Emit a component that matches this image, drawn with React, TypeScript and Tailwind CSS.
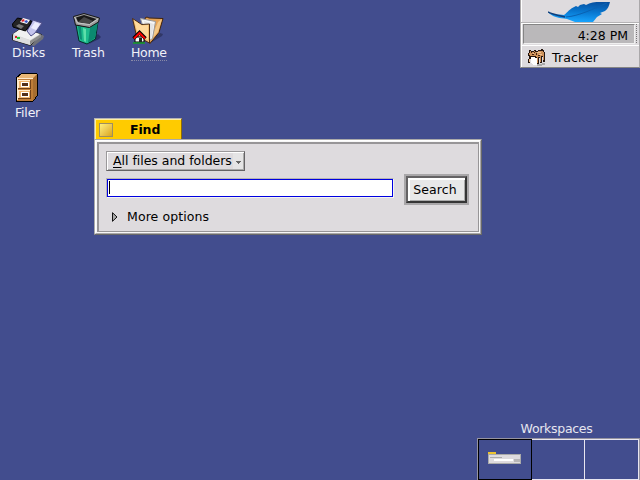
import React from "react";

function DisksIcon() {
  return (
    <svg className="block" width="34" height="34" viewBox="0 0 34 34">
      <path d="M20 31 30 20 33 22 32 25 23 32Z" fill="#6f7179" />
      <path d="M1.5 20.5 10 14 30.500 20.500 19.500 31.500 1.500 26Z" fill="#d5d5d5" stroke="#222" />
      <path d="m2 20 9-6 18 6-10 6Z" fill="#f1f1f1" />
      <path d="m2 21 17 5v5L2 26Z" fill="#dedede" />
      <path d="m19 27 11-7v3l-11 8Z" fill="#8d8d8d" />
      <path d="m16 17 6-11 9 3-7 10-4 3Z" fill="#c5c5ee" stroke="#50508a" />
      <path d="m20 14 4-6 5 2-4 6Z" fill="#ededff" />
      <path d="m1.500 10 5-6 14 3-1 3-5 7L2 13Z" fill="#242424" stroke="#000" />
      <path d="m9 8 3-4 7 2-3 4Z" fill="#fff" />
      <path d="m10 7 2-2 2 1-2 2Z" fill="#d9232e" />
      <path d="m13 8 2-2 2 1-1 2Z" fill="#3555c4" />
      <path d="m5 12 3-2 5 2-3 3Z" fill="#777" />
      <path d="M4 22h2v2H4z" fill="#e02222" />
      <path d="M6 23h3v2H6z" fill="#17ca35" />
    </svg>
  );
}

function TrashIcon() {
  return (
    <svg className="block" width="32" height="34" viewBox="0 0 32 34">
      <path d="m22 24 3-2 3 3-2 2-10 5Z" fill="#2b3267" />
      <path d="m3 13 13 2 9-5-2.500 17-8.500 5-8-3Z" fill="#1cba8c" stroke="#062b27" />
      <path d="m17 16 8-6-3 16-7 5Z" fill="#0b8a70" />
      <path d="m5 14 3 1 1 13-2-1Z" fill="#0c8a72" />
      <path d="m10 16 3 1v13l-2-1Z" fill="#5ddfaa" />
      <path d="M.5 4.500 11 1.500 26.500 6l-1 4-9 5.500-14-2.500Z" fill="#9c9c9c" stroke="#161616" />
      <path d="m3 5.500 8-2.500 12.500 4L16 12 5 10Z" fill="#191919" />
      <path d="m5 10 6-5 9 4-4 3Z" fill="#484848" />
      <path d="m1.500 5 3 6 12 1.500L25 7" fill="none" stroke="#c8c8c8" />
    </svg>
  );
}

function HomeIcon() {
  return (
    <svg className="block" width="33" height="32" viewBox="0 0 33 32">
      <path d="m20 26 8-7 3 1-1 2-10 6Z" fill="#303766" />
      <path d="m13 4 2-1 2 1 14 .500-4 14-9 11Z" fill="#e6a355" stroke="#42250d" />
      <path d="m26 8 4-3-4 13-8 9Z" fill="#f5c886" />
      <path d="m8.500 4.500 15 3-3 17-5 3Z" fill="#f7f7f7" stroke="#999" />
      <path d="m12 7 10 3-3 15-3 1Z" fill="#e4e4e4" />
      <path d="m.5 4.500 9 6 8-.500v19l-13-7Z" fill="#f3bd70" stroke="#4a2b15" />
      <path d="m2 6 8 5.500 6-.500v15L6 21Z" fill="#ffd99c" />
      <path d="M3 23h9v5H3z" fill="#fff" stroke="#000" />
      <path d="m1.500 24.500 6-6 6 6" fill="none" stroke="#000" strokeWidth="3.500" />
      <path d="m2 24.500 5.500-5.500 5.500 5.500" fill="none" stroke="#f00" strokeWidth="2" />
      <path d="M7 24h3v4H7z" fill="#222" />
      <path d="M1 29h12" stroke="#159f22" strokeWidth="1.500" />
    </svg>
  );
}

function FilerIcon() {
  return (
    <svg className="block" width="24" height="30" viewBox="0 0 24 30" shapeRendering="crispEdges">
      <path d="M1.500 4.500 6.500 .500h15l1 1v21l-5 6h-16Z" fill="#d49b54" stroke="#000" />
      <path d="m2 5 5-4h14l-4 4Z" fill="#e8b675" />
      <path d="m18 5 4-4v21l-4 6Z" fill="#a66d31" />
      <path d="M2 5h16v23H2z" fill="#bf7d38" />
      <path d="M3.500 7.500h12v8h-12zM3.500 17.500h12v8h-12z" fill="#efb56f" stroke="#704019" />
      <path d="M3 15V7h12M3 25v-8h12M2 27V5h16" fill="none" stroke="#ffebcd" />
      <path d="M6 9h8v5H6zM6 19h8v5H6z" fill="#fff" />
      <path d="M7 10h6v3H7zM7 20h6v3H7z" fill="#52301b" />
    </svg>
  );
}

function Feather() {
  return (
    <svg className="block" width="64" height="22" viewBox="0 0 64 22">
      <defs>
        <linearGradient id="feather" x1=".7" y1="0" x2=".5" y2="1">
          <stop stopColor="#0650a0" />
          <stop offset=".5" stopColor="#0877d0" />
          <stop offset="1" stopColor="#18a5ff" />
        </linearGradient>
      </defs>
      <path d="M0 12c5 3 10 2 16 3 4-3 5-6 12-9l2 1 2-2 4-1 2 1c6-4 14-3 24-3-1 4-2 7-5 9l-5 2 2 1-5 3-4 5H27l-8-3c-8-1-15-2-19-7Z" fill="url(#feather)" />
      <path d="M0 12c5 3 10 3 17 5" fill="none" stroke="#123e79" strokeWidth="1.500" />
      <path d="M18 17C31 16 45 9 59 3" fill="none" stroke="#0962b3" />
    </svg>
  );
}

function TrackerIcon() {
  return (
    <svg className="block" width="18" height="17" viewBox="0 0 18 17" shapeRendering="crispEdges">
      <path d="M9 15h5v-1h3v2h-3v1H9Z" fill="#aaa" />
      <path d="M3 8h6v8H6l-3-2Z" fill="#fff" />
      <path d="M1 1h2v1h3V1h2v1h2V1h3V0h2v1h1v2h1v10h-2V8h-1v6h-2V9h-1v6H9V9H7V8H3v2H2v4H0v-4h1V7H0V4h1Z" fill="#24150e" />
      <path d="M2 2h1v1h3V2h1v1h3V2h5v1h1v8h-1V7h-2v6h-1V8h-2v6h-1V8H8V7H3L1 6V4h1Z" fill="#cf925a" />
      <path d="M3 3h1v1H3zM6 3h1v1H6zM4 5h2v1H4zM8 4h1v2H8zM10 6h2v1h-2z" fill="#40200e" />
      <path d="M9 3h4v1H9zM11 5h3v1h-3zM5 4h1v1H5zM1 10h1v3H1z" fill="#efc191" />
    </svg>
  );
}

function DesktopItem({ icon, label, place, text }: { icon: React.ReactNode; label: string; place: string; text: string }) {
  return (
    <div className={`absolute ${place}`}>
      {icon}
      <div className={`absolute whitespace-nowrap leading-4 text-[#f1f1f8] ${text}`}>{label}</div>
    </div>
  );
}

function Deskbar() {
  return (
    <aside className="absolute top-0 right-0 flex h-[68px] w-[120px] flex-col border-r border-b border-l border-r-[#aaa8aa] border-b-[#858585] border-l-[#aaa8aa] bg-[#dedbde] shadow-[inset_1px_0_0_white]">
      <div className="h-[23px] border-b border-[#b5b3b5] pl-[27px]"><Feather /></div>
      <div className="flex h-[22px] border-t border-white pl-[2px]">
        <div className="h-[20px] w-[112px] border border-t-[#858585] border-r-[#f0f0f0] border-b-[#f0f0f0] border-l-[#858585] bg-[#bab8ba] pt-[3px] pr-[6px] text-right leading-4">4:28 PM</div>
        <div className="ml-px h-[19px] border-l border-dotted border-[#777]" />
      </div>
      <div className="flex h-[22px] items-center border-t border-white pt-[2px] pl-[7px]">
        <TrackerIcon /><span className="ml-[6px] leading-4 tracking-[.15px]">Tracker</span>
      </div>
    </aside>
  );
}

function FindWindow() {
  return (
    <section className="absolute top-[118px] left-[94px] w-[388px]">
      <header className="flex h-[21px] w-[88px] items-center border-t border-r border-l border-t-[#b5b3b5] border-r-[#8d6b08] border-l-[#b5b3b5] bg-[#ffcb00] shadow-[inset_1px_1px_0_#fff0a0]">
        <div className="mt-[2px] ml-[4px] h-[14px] w-[14px] border border-[#9c8e62] bg-linear-to-br from-[#fff07c] to-[#d9a414]" />
        <b className="mt-[2px] ml-[17px] leading-4 tracking-[-.1px]">Find</b>
      </header>
      <div className="h-[96px] border border-t-[#aaa] border-r-[#696969] border-b-[#696969] border-l-[#aaa] bg-[#dedbde]">
        <div className="h-full border border-t-white border-r-[#aaa8aa] border-b-[#aaa8aa] border-l-white">
          <div className="h-full border border-[#f7f7f7]">
            <div className="h-full border-t-2 border-r border-b border-l-2 border-[#979597] pt-[7px] pl-[7px]">
              <div className="flex h-[20px] w-[139px] border border-t-[#9a989a] border-r-[#656365] border-b-[#656365] border-l-[#9a989a] shadow-[inset_1px_1px_0_white,inset_-1px_-1px_0_#aaa]">
                <div className="w-[126px] pl-[6px] leading-[18px] tracking-[-.02px] whitespace-nowrap"><span className="underline underline-offset-2">A</span>ll files and folders</div>
                <div className="mt-px flex h-[16px] w-[10px] items-center justify-center bg-[#e5e4e5] pt-[2px]"><svg className="block" width="5" height="3"><path d="M0 0h5v1H4v1H3v1H2V2H1V1H0Z" fill="#666" /></svg></div>
              </div>
              <div className="flex pt-[3px]">
                <div className="mt-[4px] flex h-[20px] w-[288px] border border-t-[#b5b3b5] border-r-[#f3f3f3] border-b-[#f3f3f3] border-l-[#b5b3b5]">
                  <div className="h-[18px] w-full border border-[#0000e0] bg-white pt-px pl-px"><div className="h-[13px] w-px bg-black" /></div>
                </div>
                <div className="ml-[10px] h-[31px] w-[65px] border-2 border-[#a9a7a9]">
                  <button className="block h-full w-full border-2 border-t-[#656365] border-r-[#353535] border-b-[#353535] border-l-[#656365] bg-[#e8e8e8] pr-[3px] leading-[22px] tracking-[.1px] shadow-[inset_2px_2px_0_white,inset_-1px_-1px_0_#aaa]">Search</button>
                </div>
              </div>
              <div className="mt-[4px] flex h-4 items-center pl-[5px]">
                <svg className="block" width="7" height="10" viewBox="0 0 7 10"><path d="M1.500 .700v8.600L6 5Z" fill="#aaa" stroke="#111" /></svg>
                <span className="ml-[9px] leading-4 tracking-[.1px]">More options</span>
              </div>
            </div>
          </div>
        </div>
      </div>
    </section>
  );
}

function Workspaces() {
  return (
    <section className="absolute right-0 bottom-0 w-[163px]">
      <div className="mb-px h-[16px] pr-[4px] text-center leading-4 tracking-[-.3px] text-[#e6e6ef]">Workspaces</div>
      <div className="flex h-[42px] border-t border-r border-l border-[#9694a0]">
        <div className="w-[54px] border border-black pt-[12px] pl-[9px]">
          <div className="h-[2px] w-[8px] bg-[#edc32f]" />
          <div className="h-[10px] w-[33px] border border-[#aaa] bg-[#dedbde] pt-[2px] pl-px">
            <div className="h-px w-[12px] bg-[#aaa]" />
            <div className="mt-px flex"><div className="ml-[4px] h-[2px] w-[19px] bg-white" /><div className="ml-px h-[3px] w-[6px] bg-[#b7b5b7]" /></div>
          </div>
        </div>
        <div className="w-[53px] border-t border-r border-b border-[#e8e6f0]" />
        <div className="grow border-t border-r border-b border-[#e8e6f0]" />
      </div>
    </section>
  );
}

export default function App() {
  return (
    <main className="relative h-[480px] w-[640px] overflow-hidden bg-[#424d8e] font-['DejaVu_Sans',sans-serif] text-[12.5px] text-black">
      <DesktopItem icon={<DisksIcon />} label="Disks" place="top-[14px] left-[11px]" text="top-[31px] left-[1px]" />
      <DesktopItem icon={<TrashIcon />} label="Trash" place="top-[12px] left-[73px]" text="top-[33px] left-[-1px]" />
      <DesktopItem icon={<HomeIcon />} label="Home" place="top-[14px] left-[132px]" text="top-[31px] left-[-1px] h-[16px] border-b border-dotted border-[#898aa7] tracking-[-.3px]" />
      <DesktopItem icon={<FilerIcon />} label="Filer" place="top-[73px] left-[15px]" text="top-[32px] left-[0px] tracking-[-.2px]" />
      <Deskbar />
      <FindWindow />
      <Workspaces />
    </main>
  );
}
